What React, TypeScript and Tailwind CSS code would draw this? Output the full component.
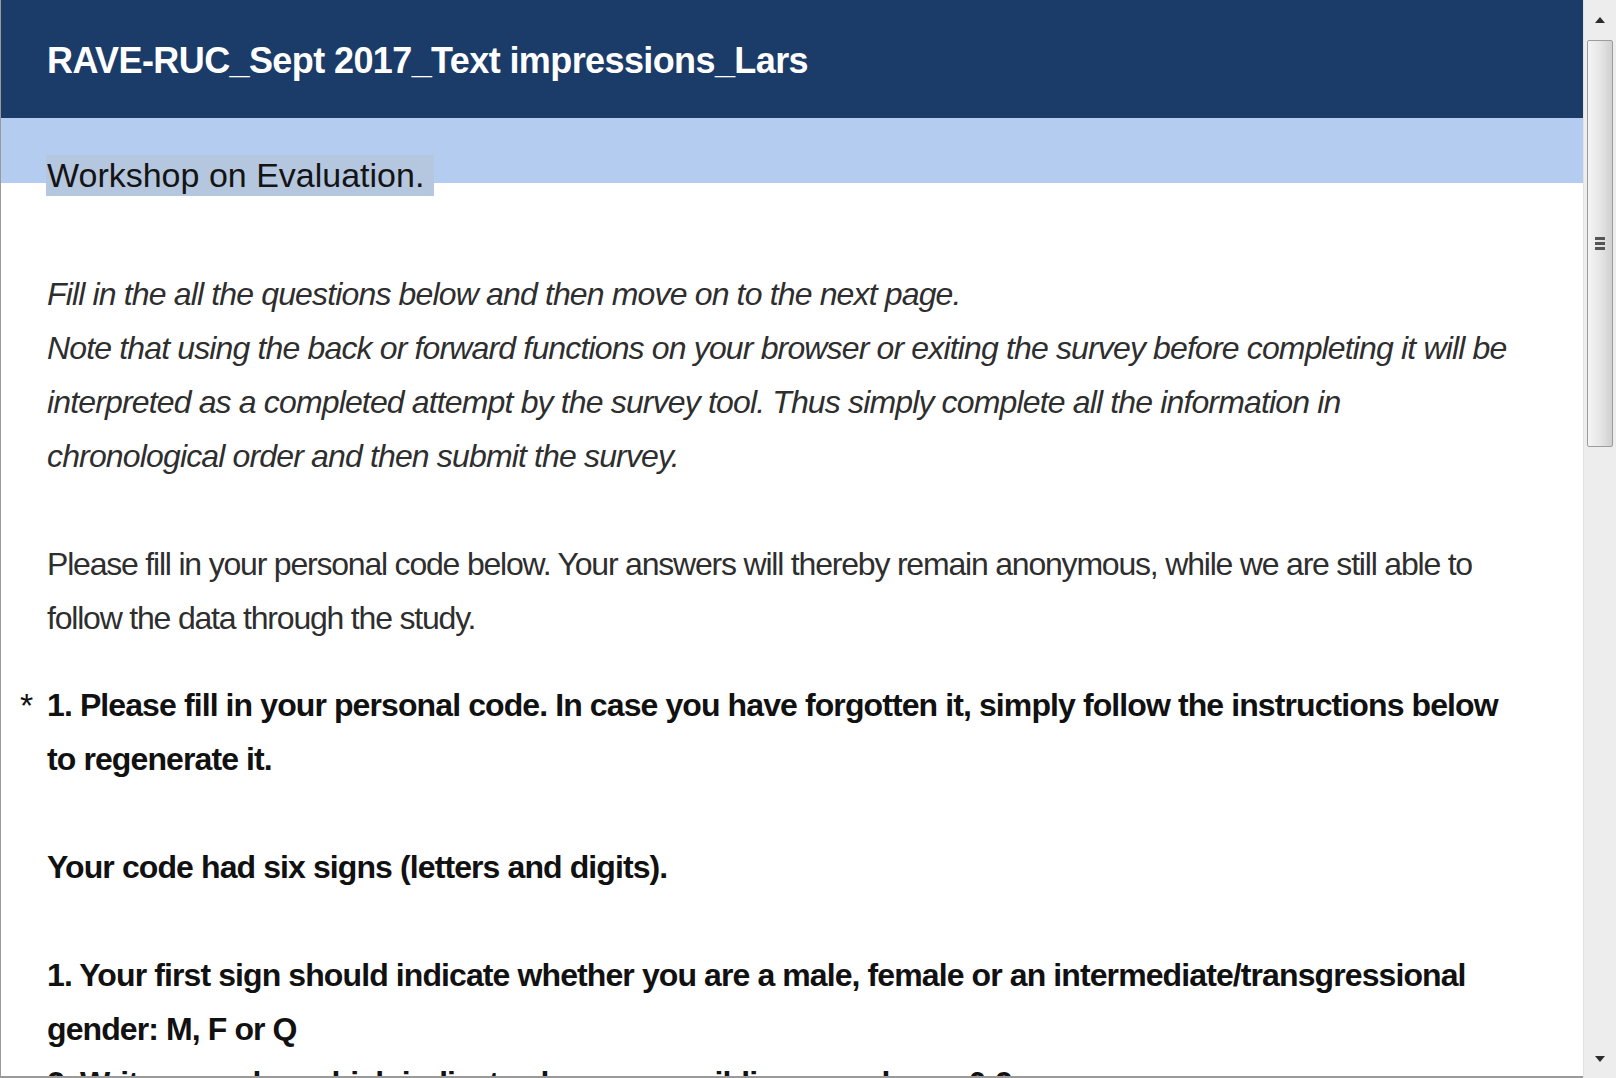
import React from "react";

const sans = { fontFamily: '"Liberation Sans", Arial, sans-serif' };

const Line = ({ children }: { children: React.ReactNode }) => (
  <span className="block whitespace-nowrap">{children}</span>
);

const Scrollbar = () => (
  <div className="w-[33px] shrink-0 bg-[#ededed] border-l border-[#e2e2e2] flex flex-col items-center">
    <div className="h-[40px] w-full flex items-center justify-center">
      <svg width="12" height="8" viewBox="0 0 12 8">
        <path d="M6 1 L11 7 L1 7 Z" fill="#2c2c2c" />
      </svg>
    </div>
    <div className="w-[26px] h-[407px] rounded-[2px] border border-[#9c9c9c] bg-gradient-to-r from-[#f4f4f4] via-[#e6e6e6] to-[#cfcfcf] flex items-center justify-center">
      <div className="flex flex-col gap-[2px]">
        <div className="w-[10px] h-[3px] bg-[#555]" />
        <div className="w-[10px] h-[3px] bg-[#555]" />
        <div className="w-[10px] h-[3px] bg-[#555]" />
      </div>
    </div>
    <div className="flex-1" />
    <div className="h-[38px] w-full flex items-center justify-center">
      <svg width="12" height="8" viewBox="0 0 12 8">
        <path d="M1 1 L11 1 L6 7 Z" fill="#2c2c2c" />
      </svg>
    </div>
  </div>
);

export default function App() {
  return (
    <div className="h-screen w-full flex overflow-hidden bg-white" style={sans}>
      <div className="flex-1 flex flex-col border-l border-b-2 border-[#9a9a9a] overflow-hidden">
        <div className="h-[118px] shrink-0 bg-[#1b3b69] pl-[46px] pt-[39px]">
          <h1 className="text-white font-bold text-[36px] tracking-[-0.6px] leading-[44px] whitespace-nowrap">
            RAVE-RUC_Sept 2017_Text impressions_Lars
          </h1>
        </div>
        <div className="h-[65px] shrink-0 bg-[#b3ccf0] pl-[45px] pt-[37px]">
          <span className="inline-block bg-[#b5c7df] h-[41px] text-[34px] tracking-[0px] leading-[41px] text-[#141414] pr-[10px] pl-[1px] whitespace-nowrap">
            Workshop on Evaluation.
          </span>
        </div>
        <div className="pl-[46px] pt-[84px] text-[32px] leading-[54px]">
          <p className="italic text-[#2e2e2e] tracking-[-0.85px]">
            <Line>Fill in the all the questions below and then move on to the next page.</Line>
            <Line>Note that using the back or forward functions on your browser or exiting the survey before completing it will be</Line>
            <Line>interpreted as a completed attempt by the survey tool. Thus simply complete all the information in</Line>
            <Line>chronological order and then submit the survey.</Line>
          </p>
          <p className="text-[#2e2e2e] mt-[54px] tracking-[-1.2px]">
            <Line>Please fill in your personal code below. Your answers will thereby remain anonymous, while we are still able to</Line>
            <Line>follow the data through the study.</Line>
          </p>
          <div className="relative mt-[33px] font-bold text-[#111] tracking-[-0.9px]">
            <span className="absolute -left-[27px] top-0 text-[34px] font-normal">*</span>
            <Line>1. Please fill in your personal code. In case you have forgotten it, simply follow the instructions below</Line>
            <Line>to regenerate it.</Line>
            <Line>&nbsp;</Line>
            <Line>Your code had six signs (letters and digits).</Line>
            <Line>&nbsp;</Line>
            <Line>1. Your first sign should indicate whether you are a male, female or an intermediate/transgressional</Line>
            <Line>gender: M, F or Q</Line>
            <Line>2. Write a number which indicates how many siblings you have: 0-9</Line>
          </div>
        </div>
      </div>
      <Scrollbar />
    </div>
  );
}
